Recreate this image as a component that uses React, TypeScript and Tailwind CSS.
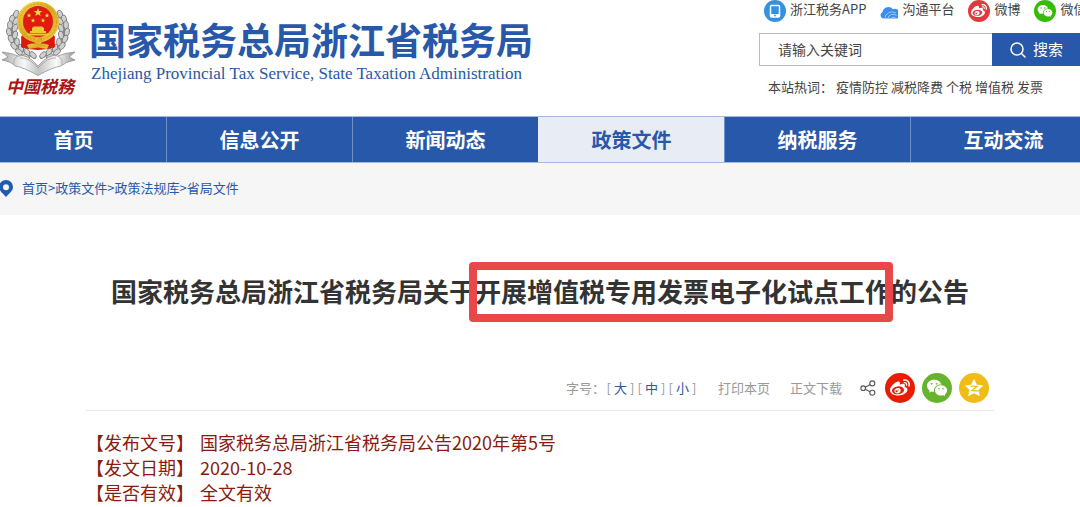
import type { ReactNode } from 'react';
import { FaWeibo } from 'react-icons/fa';
import { RiWechatFill } from 'react-icons/ri';

const NAV_ITEMS = ['首页', '信息公开', '新闻动态', '政策文件', '纳税服务', '互动交流'];
const ACTIVE_NAV = '政策文件';
const HOT_WORDS = ['疫情防控', '减税降费', '个税', '增值税', '发票'];
const CRUMBS = ['首页', '政策文件', '政策法规库', '省局文件'];
const META = [
  { label: '【发布文号】', value: '国家税务总局浙江省税务局公告2020年第5号' },
  { label: '【发文日期】', value: '2020-10-28' },
  { label: '【是否有效】', value: '全文有效' },
];

// Grain positions of the left wheat ear; the right one is mirrored.
const GRAINS = [
  { x: 16, y: 14, r: 25 },
  { x: 12, y: 19, r: 15 },
  { x: 16, y: 21, r: 35 },
  { x: 10, y: 25, r: 5 },
  { x: 15, y: 28, r: 25 },
  { x: 9, y: 32, r: -12 },
  { x: 15, y: 35, r: 15 },
  { x: 11, y: 39, r: -25 },
  { x: 17, y: 42, r: 0 },
  { x: 14, y: 46, r: -40 },
  { x: 21, y: 48, r: -15 },
  { x: 19, y: 52, r: -50 },
  { x: 27, y: 52, r: -30 },
  { x: 26, y: 57, r: -60 },
  { x: 33, y: 55, r: -45 },
];

const STAR = 'M0-5 1.2-1.6 4.8-1.5 1.9.6 2.9 4 0 2-2.9 4-1.9.6-4.8-1.5-1.2-1.6Z';

function WheatEar() {
  return (
    <>
      <path d="M17 12C6 26 10 46 36 58" fill="none" stroke="#888" strokeWidth="3" />
      {GRAINS.map((g) => (
        <ellipse
          key={`${g.x}-${g.y}`}
          cx={g.x}
          cy={g.y}
          rx="2.5"
          ry="4"
          transform={`rotate(${g.r} ${g.x} ${g.y})`}
          fill="#cfcfcf"
          stroke="#777"
          strokeWidth="0.8"
        />
      ))}
    </>
  );
}

function Emblem() {
  return (
    <svg viewBox="0 0 76 76" className="h-[76px] w-[76px]" aria-hidden="true">
      <defs>
        <linearGradient id="gold" x1="0" y1="0" x2="1" y2="1">
          <stop offset="0" stopColor="#f3d548" />
          <stop offset="0.5" stopColor="#dcaa22" />
          <stop offset="1" stopColor="#efcb3f" />
        </linearGradient>
        <linearGradient id="ribbon" x1="0" y1="0" x2="1" y2="0">
          <stop offset="0" stopColor="#aaa" />
          <stop offset="0.3" stopColor="#f7f7f7" />
          <stop offset="0.5" stopColor="#c4c4c4" />
          <stop offset="0.75" stopColor="#fafafa" />
          <stop offset="1" stopColor="#999" />
        </linearGradient>
      </defs>
      <WheatEar />
      <g transform="translate(76 0) scale(-1 1)">
        <WheatEar />
      </g>
      <path d="M22 34 54 34 55 47 48 49 38 50 28 49 21 47Z" fill="#dc1710" />
      <ellipse cx="38" cy="22" rx="21" ry="20.5" fill="url(#gold)" />
      <ellipse cx="38" cy="22" rx="18.5" ry="18" fill="none" stroke="#c08c14" strokeWidth="0.6" strokeDasharray="2 1.5" />
      <ellipse cx="38" cy="21.5" rx="15" ry="15.5" fill="#e31a12" />
      <path d={STAR} transform="translate(38 12.5) scale(.9)" fill="#f9dc3f" />
      <path d={STAR} transform="translate(29 15.5) scale(.5)" fill="#f9dc3f" />
      <path d={STAR} transform="translate(47 15.5) scale(.5)" fill="#f9dc3f" />
      <path d={STAR} transform="translate(33 20.5) scale(.5)" fill="#f9dc3f" />
      <path d={STAR} transform="translate(43 20.5) scale(.5)" fill="#f9dc3f" />
      <path d="M32 28 34 26.5H42L44 28V31H46V33H30V31H32ZM27 33.5H49L48 35.5H28Z" fill="#f0c832" />
      <path d="M21 36 27 40 32 42 29 46 22 48ZM55 36 49 40 44 42 47 46 54 48Z" fill="#dc1710" />
      <circle cx="38" cy="41" r="4" fill="url(#gold)" stroke="#c08c14" strokeWidth="0.6" />
      <path d="M27 45Q32 42 38 45Q44 42 49 45L47 49 38 47.5 29 49Z" fill="url(#gold)" />
      <path
        d="M2 52Q12 53 18 56Q27 53 38 66Q49 53 58 56Q64 53 75 52L69 57 75 60Q65 62 61 66Q53 67 38 75.5Q23 67 15 66Q12 62 2 60L8 57Z"
        fill="url(#ribbon)"
        stroke="#888"
        strokeWidth="0.7"
      />
      <path d="M18 56Q13 58 14 65M58 56Q63 58 62 65M20 58Q29 57 38 68Q48 57 56 58" fill="none" stroke="#999" strokeWidth="0.7" />
    </svg>
  );
}

function PhoneIcon() {
  return (
    <svg viewBox="0 0 22 22" className="h-[22px] w-[22px] shrink-0" aria-hidden="true">
      <circle cx="11" cy="11" r="11" fill="#3491df" />
      <rect x="6.5" y="5.5" width="9" height="11.5" rx="1" fill="none" stroke="#fff" strokeWidth="1.5" />
      <path d="M6.5 14H15.5V17H6.5Z" fill="#fff" />
      <circle cx="11" cy="15.5" r="0.9" fill="#3491df" />
    </svg>
  );
}

function CloudIcon() {
  return (
    <svg viewBox="0 0 18 13" className="mt-0.5 h-[13px] w-[18px] shrink-0" aria-hidden="true">
      <path d="M3 12.5A3.5 3.5 0 0 1 2.5 6 6 6 0 0 1 13 3.2 4.8 4.8 0 0 1 17 12.5Z" fill="#3b8cf5" />
      <path d="M5 12.5A7 6.5 0 0 1 16 7M8 12.5A5 4.5 0 0 1 16.5 9.5M11 12.5A3 2.5 0 0 1 15.5 12" fill="none" stroke="#c6e2ff" strokeWidth="0.7" />
    </svg>
  );
}

function PinIcon() {
  return (
    <svg viewBox="0 0 14 17" className="h-[17px] w-[14px] shrink-0" aria-hidden="true">
      <path d="M6 0A7 7 0 0 1 13 7C13 11 9 13.5 6 17 3 13.5-1 11-1 7A7 7 0 0 1 6 0Z" fill="#1f5bb5" />
      <circle cx="6" cy="7.2" r="3" fill="#f6f6f6" />
    </svg>
  );
}

function SearchIcon() {
  return (
    <svg viewBox="0 0 16 16" className="h-4 w-4" aria-hidden="true" fill="none" stroke="#fff" strokeWidth="1.5">
      <circle cx="7" cy="7" r="6" />
      <path d="M11.5 11.5 15 15" strokeLinecap="round" />
    </svg>
  );
}

function ShareIcon() {
  return (
    <svg viewBox="0 0 16 16" className="h-4 w-4" aria-hidden="true" fill="none" stroke="#555" strokeWidth="1.1">
      <circle cx="3.2" cy="8.2" r="2.3" />
      <circle cx="12.3" cy="3.4" r="2.5" />
      <circle cx="12.3" cy="12.8" r="2.5" />
      <path d="M5.2 7.2 10.2 4.6M5.2 9.2 10.2 11.7" />
    </svg>
  );
}

function QzoneIcon() {
  return (
    <svg viewBox="0 0 20 20" className="h-[22px] w-[22px]" aria-hidden="true">
      <path
        d="M10 1.5 12.6 7 18.5 7.7 14.2 11.6 15.3 17.5 10 14.7 4.7 17.5 5.8 11.6 1.5 7.7 7.4 7Z"
        fill="#fff"
      />
      <path d="M7 8.5Q10 8 12.8 8.6L8 12.2Q11 13 14.5 12.5" fill="none" stroke="#f1bb18" strokeWidth="1.1" />
    </svg>
  );
}

function TopLink({ icon, children }: { icon: ReactNode; children: ReactNode }) {
  return (
    <a href="#" className="flex shrink-0 items-center gap-1">
      {icon}
      <span className="pb-1">{children}</span>
    </a>
  );
}

function Header() {
  return (
    <header className="flex h-[116px] justify-between overflow-hidden">
      <a href="#" className="flex gap-[13px]">
        <span className="flex w-[76px] flex-col items-center">
          <Emblem />
          <span className="pl-1 text-[17px] leading-5 font-bold whitespace-nowrap text-[#a81414] italic">
            中國税務
          </span>
        </span>
        <span className="flex flex-col pt-4 whitespace-nowrap text-[#2858aa]">
          <span className="text-[37px] leading-[46px] font-bold">国家税务总局浙江省税务局</span>
          <span className="pl-0.5 font-['Liberation_Serif',serif] text-[17px] leading-6">
            Zhejiang Provincial Tax Service, State Taxation Administration
          </span>
        </span>
      </a>
      <div className="flex w-[321px] shrink-0 flex-col text-[13px] whitespace-nowrap text-[#444]">
        <div className="flex h-[22px] items-center gap-[14px] pl-[5px]">
          <TopLink icon={<PhoneIcon />}>浙江税务APP</TopLink>
          <TopLink icon={<CloudIcon />}>沟通平台</TopLink>
          <TopLink
            icon={
              <span className="flex h-[22px] w-[22px] items-center justify-center rounded-full bg-[#e03a3e]">
                <FaWeibo className="h-4 w-4 text-white" />
              </span>
            }
          >
            微博
          </TopLink>
          <TopLink
            icon={
              <span className="flex h-[22px] w-[22px] items-center justify-center rounded-full bg-[#38bb05]">
                <RiWechatFill className="h-4 w-4 text-white" />
              </span>
            }
          >
            微信
          </TopLink>
        </div>
        <form className="mt-[11px] flex h-[33px]">
          <input
            type="text"
            aria-label="搜索关键词"
            placeholder="请输入关键词"
            className="min-w-0 flex-1 border border-r-0 border-[#bbb] pb-0.5 pl-[18px] text-sm outline-none placeholder:text-[#444]"
          />
          <button
            type="button"
            className="flex w-[88px] items-center gap-[7px] bg-[#2858aa] pl-[18px] text-[15px] text-white"
          >
            <SearchIcon />
            搜索
          </button>
        </form>
        <div className="mt-[11px] flex gap-[3px] pl-[9px] leading-5">
          <span className="w-[65px]">本站热词：</span>
          {HOT_WORDS.map((word) => (
            <a key={word} href="#">
              {word}
            </a>
          ))}
        </div>
      </div>
    </header>
  );
}

function MainNav() {
  return (
    <nav className="overflow-hidden">
      <ul className="-mr-4 -ml-5 grid grid-cols-6 border-y border-[#a5b9dc]">
        {NAV_ITEMS.map((item) => (
          <li key={item}>
            <a
              href="#"
              className={
                item === ACTIVE_NAV
                  ? 'block border-l border-[#e8ecf5] bg-[#e8ecf5] pt-px text-center text-xl leading-[44px] font-bold text-[#2858aa]'
                  : 'block border-l border-[#6f8fc8] bg-[#2858aa] pt-px text-center text-xl leading-[44px] font-bold text-white'
              }
            >
              {item}
            </a>
          </li>
        ))}
      </ul>
    </nav>
  );
}

function Breadcrumb() {
  return (
    <div className="flex h-[52px] items-center gap-2 bg-[#f6f6f6] pb-0.5 text-[13px] text-[#2858aa]">
      <PinIcon />
      <div>
        {CRUMBS.map((crumb, i) => (
          <span key={crumb}>
            {i > 0 && '>'}
            <a href="#">{crumb}</a>
          </span>
        ))}
      </div>
    </div>
  );
}

function Toolbar() {
  return (
    <div className="flex h-[45px] items-center justify-end border-b border-[#e6e6e6] pr-[5px] text-[13px] whitespace-nowrap text-[#999]">
      <div className="flex items-center">
        <span>字号：</span>
        {['大', '中', '小'].map((size) => (
          <span key={size} className="flex w-[31px] items-center justify-center gap-[3px]">
            [
            <button type="button" className="text-[#2858aa]">
              {size}
            </button>
            ]
          </span>
        ))}
      </div>
      <button type="button" className="ml-5">
        打印本页
      </button>
      <a href="#" className="ml-5">
        正文下载
      </a>
      <div className="ml-[18px] flex items-center gap-[7px]">
        <ShareIcon />
        <a
          href="#"
          aria-label="微博"
          className="ml-0.5 flex h-[30px] w-[30px] items-center justify-center rounded-full bg-[#e81c03]"
        >
          <FaWeibo className="h-5 w-5 text-white" />
        </a>
        <a
          href="#"
          aria-label="微信"
          className="flex h-[30px] w-[30px] items-center justify-center rounded-full bg-[#65b42b]"
        >
          <RiWechatFill className="h-[22px] w-[22px] text-white" />
        </a>
        <a
          href="#"
          aria-label="QQ空间"
          className="flex h-[30px] w-[30px] items-center justify-center rounded-full bg-[#f1bb18]"
        >
          <QzoneIcon />
        </a>
      </div>
    </div>
  );
}

function Article() {
  return (
    <main className="mx-[86px] pt-[60px]">
      <h1 className="flex justify-center text-[26px] leading-8 font-bold whitespace-nowrap text-[#333]">
        国家税务总局浙江省税务局关于
        <span className="relative">
          开展增值税专用发票电子化试点工作
          <span className="absolute -top-[13px] -right-0.5 -bottom-[15px] -left-1.5 rounded border-8 border-[#ea4848]" />
        </span>
        的公告
      </h1>
      <div className="mt-[59px]">
        <Toolbar />
      </div>
      <dl className="mt-[19px] text-lg leading-[25px] text-[#8b1a10]">
        {META.map((row) => (
          <div key={row.label} className="flex gap-1.5">
            <dt>{row.label}</dt>
            <dd>{row.value}</dd>
          </div>
        ))}
      </dl>
    </main>
  );
}

export default function App() {
  return (
    <div className="overflow-x-hidden bg-white font-['Noto_Sans_CJK_SC',sans-serif]">
      <Header />
      <MainNav />
      <Breadcrumb />
      <Article />
    </div>
  );
}
